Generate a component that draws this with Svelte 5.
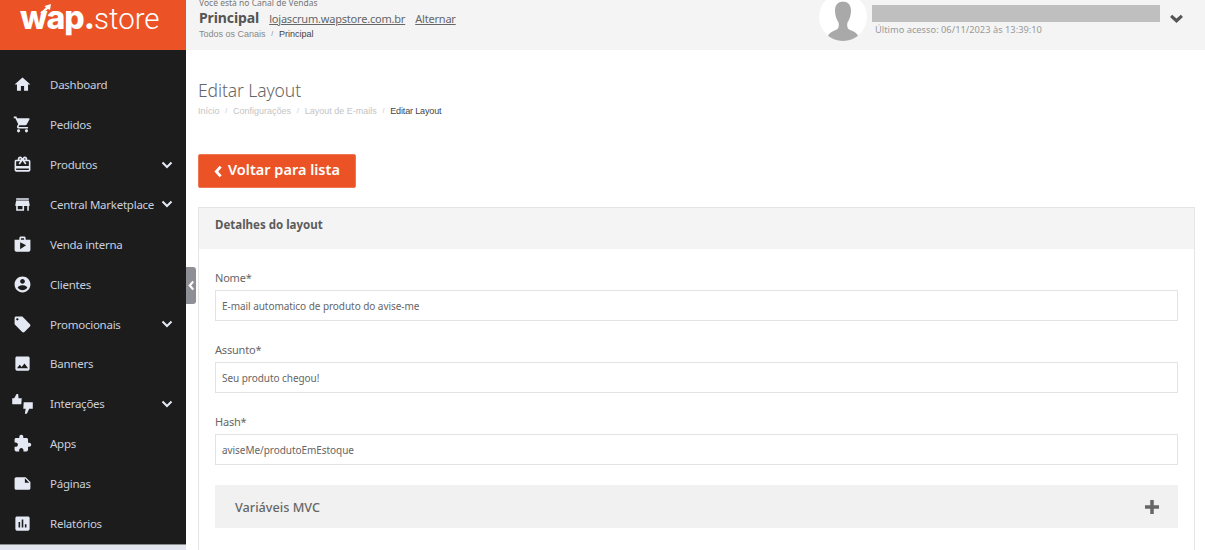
<script>
  const menu = [
    { label: "Dashboard", d: "M10 20v-6h4v6h5v-8h3L12 3 2 12h3v8z" },
    { label: "Pedidos", d: "M7 18c-1.1 0-1.99.9-1.99 2S5.9 22 7 22s2-.9 2-2-.9-2-2-2zM1 2v2h2l3.6 7.59-1.35 2.45c-.16.28-.25.61-.25.96 0 1.1.9 2 2 2h12v-2H7.42c-.14 0-.25-.11-.25-.25l.03-.12.9-1.63h7.45c.75 0 1.41-.41 1.75-1.03l3.58-6.49c.08-.14.12-.31.12-.48 0-.55-.45-1-1-1H5.21l-.94-2H1zm16 16c-1.1 0-1.99.9-1.99 2s.89 2 1.99 2 2-.9 2-2-.9-2-2-2z" },
    { label: "Produtos", open: true, d: "M20 6h-2.18c.11-.31.18-.65.18-1 0-1.66-1.34-3-3-3-1.05 0-1.96.54-2.5 1.35l-.5.67-.5-.68C10.96 2.54 10.05 2 9 2 7.34 2 6 3.34 6 5c0 .35.07.69.18 1H4c-1.11 0-1.99.89-1.99 2L2 19c0 1.11.89 2 2 2h16c1.11 0 2-.89 2-2V8c0-1.11-.89-2-2-2zm-5-2c.55 0 1 .45 1 1s-.45 1-1 1-1-.45-1-1 .45-1 1-1zM9 4c.55 0 1 .45 1 1s-.45 1-1 1-1-.45-1-1 .45-1 1-1zm11 15H4v-2h16v2zm0-5H4V8h5.08L7 10.83 8.62 12 11 8.76l1-1.36 1 1.36L15.38 12 17 10.83 14.92 8H20v6z" },
    { label: "Central Marketplace", open: true, d: "M20 4H4v2h16V4zm1 10v-2l-1-5H4l-1 5v2h1v6h10v-6h4v6h2v-6h1zm-9 4H6v-4h6v4z" },
    { label: "Venda interna", d: "M16 6V4c0-1.11-.89-2-2-2h-4c-1.11 0-2 .89-2 2v2H2v13c0 1.11.89 2 2 2h16c1.11 0 2-.89 2-2V6h-6zm-6-2h4v2h-4V4zM9 18V9l7.5 4L9 18z" },
    { label: "Clientes", d: "M12 2C6.48 2 2 6.48 2 12s4.48 10 10 10 10-4.48 10-10S17.52 2 12 2zm0 3c1.66 0 3 1.34 3 3s-1.34 3-3 3-3-1.34-3-3 1.34-3 3-3zm0 14.2c-2.5 0-4.71-1.28-6-3.22.03-1.99 4-3.08 6-3.08 1.99 0 5.97 1.09 6 3.08-1.29 1.94-3.5 3.22-6 3.22z" },
    { label: "Promocionais", open: true, d: "M21.41 11.58l-9-9C12.05 2.22 11.55 2 11 2H4c-1.1 0-2 .9-2 2v7c0 .55.22 1.05.59 1.42l9 9c.36.36.86.58 1.41.58.55 0 1.05-.22 1.41-.59l7-7c.37-.36.59-.86.59-1.41 0-.55-.23-1.06-.59-1.42zM5.5 7C4.67 7 4 6.33 4 5.5S4.67 4 5.5 4 7 4.67 7 5.5 6.33 7 5.5 7z" },
    { label: "Banners", d: "M21 19V5c0-1.1-.9-2-2-2H5c-1.1 0-2 .9-2 2v14c0 1.1.9 2 2 2h14c1.1 0 2-.9 2-2zM8.5 13.5l2.5 3.01L14.5 12l4.5 6H5l3.5-4.5z" },
    { label: "Interações", open: true, d: "M-1 5.500h2.500L4.500 0H6.500l.5 5.500h4l-.5 7.500H-1zM13.500 10.500h11.500v8h-4.500L17.500 25h-2.500l1-6.500H13z" },
    { label: "Apps", d: "M20.5 11H19V7c0-1.1-.9-2-2-2h-4V3.5C13 2.12 11.88 1 10.5 1S8 2.12 8 3.5V5H4c-1.1 0-1.99.9-1.99 2v3.8H3.5c1.49 0 2.7 1.21 2.7 2.7s-1.21 2.7-2.7 2.7H2V20c0 1.1.9 2 2 2h3.8v-1.5c0-1.49 1.21-2.7 2.7-2.7 1.49 0 2.7 1.21 2.7 2.7V22H17c1.1 0 2-.9 2-2v-4h1.5c1.38 0 2.5-1.12 2.5-2.5S21.88 11 20.5 11z" },
    { label: "Páginas", d: "M22 10l-6-6H4c-1.1 0-2 .9-2 2v12.01c0 1.1.9 1.99 2 1.99l16-.01c1.1 0 2-.89 2-1.99v-8zm-7-4.5l5.5 5.5H15V5.5z" },
    { label: "Relatórios", d: "M19 3H5c-1.1 0-2 .9-2 2v14c0 1.1.9 2 2 2h14c1.1 0 2-.9 2-2V5c0-1.1-.9-2-2-2zM9 17H7v-7h2v7zm4 0h-2V7h2v10zm4 0h-2v-4h2v4z" }
  ];

  const fields = [
    { label: "Nome*", value: "E-mail automatico de produto do avise-me" },
    { label: "Assunto*", value: "Seu produto chegou!" },
    { label: "Hash*", value: "aviseMe/produtoEmEstoque" }
  ];
</script>

<div class="page">
  <aside class="sidebar">
    <div class="logo">
      <span class="logo-wap">wap.</span><span class="logo-store">store</span>
      <svg class="logo-arrow" width="11" height="9" viewBox="0 0 11 9"><path d="M0 9 6 3.500 4.500 2 11 0 10 6 8 5 2.500 9z" fill="#fff" /></svg>
    </div>
    <nav class="menu">
      {#each menu as item}
        <div class="menu-item">
          <svg class="menu-icon" viewBox="0 0 24 24"><path d={item.d} fill="currentColor" /></svg>
          <span class="menu-label">{item.label}</span>
          {#if item.open}
            <svg class="menu-caret" viewBox="0 0 12 8"><path d="M1.5 1.5 6 6l4.5-4.5" fill="none" stroke="currentColor" stroke-width="2" /></svg>
          {/if}
        </div>
      {/each}
    </nav>
    <div class="sidebar-foot"></div>
  </aside>

  <button class="collapse" aria-label="Recolher menu">
    <svg viewBox="0 0 8 12" width="7" height="11"><path d="M6 1.5 2 6l4 4.500" fill="none" stroke="#fff" stroke-width="2.400" /></svg>
  </button>

  <div class="main">
    <header class="topbar">
      <div class="channel">
        <div class="channel-note">Você está no Canal de Vendas</div>
        <div class="channel-row">
          <strong>Principal</strong>
          <a href="#top">lojascrum.wapstore.com.br</a>
          <a href="#top">Alternar</a>
        </div>
        <div class="crumbs top-crumbs">
          <span>Todos os Canais</span><i>/</i><span class="current">Principal</span>
        </div>
      </div>
      <div class="user">
        <div class="avatar">
          <svg viewBox="0 0 48 48" width="48" height="48">
            <path d="M24.500 8.500c-5 0-8.500 3-8.500 9 0 5 1.500 9 3.500 12 .5 2 .5 4-.5 6-2 2-8 3-10 7-.5 2-.5 3-.5 5.500h31c0-2.500 0-3.500-.5-5.500-2-4-8-5-10-7-1-2-1-4-.5-6 2-3 3.500-7 3.500-12 0-6-3.500-9-8.500-9z" fill="#a9a9a9" />
          </svg>
        </div>
        <div class="user-info">
          <div class="user-name"></div>
          <div class="user-last">Último acesso: 06/11/2023 às 13:39:10</div>
        </div>
        <svg class="user-caret" viewBox="0 0 16 10" width="15" height="9"><path d="M2 2l6 5.500L14 2" fill="none" stroke="#555" stroke-width="3.500" /></svg>
      </div>
    </header>

    <main class="content">
      <h1>Editar Layout</h1>
      <div class="crumbs page-crumbs">
        <span>Início</span><i>/</i><span>Configurações</span><i>/</i><span>Layout de E-mails</span><i>/</i><span class="current">Editar Layout</span>
      </div>

      <button class="back">
        <svg viewBox="0 0 8 12" width="9" height="13"><path d="M6 1.500 2 6l4 4.500" fill="none" stroke="#fff" stroke-width="2.600" /></svg>
        <span>Voltar para lista</span>
      </button>

      <section class="card">
        <div class="card-head">Detalhes do layout</div>
        <div class="card-body">
          {#each fields as field}
            <div class="field">
              <div class="field-label">{field.label}</div>
              <div class="input">{field.value}</div>
            </div>
          {/each}
          <div class="accordion">
            <span>Variáveis MVC</span>
            <svg viewBox="0 0 14 14" width="14" height="14"><path d="M7 0v14M0 7h14" stroke="#666" stroke-width="3.500" /></svg>
          </div>
        </div>
      </section>
    </main>
  </div>
</div>

<style>
  :global(body) {
    margin: 0;
    background: #fff;
  }

  .page {
    position: relative;
    display: flex;
    width: 1205px;
    height: 550px;
    overflow: hidden;
    font-family: "Noto Sans", sans-serif;
    color: #555;
  }

  .sidebar {
    display: flex;
    flex-direction: column;
    flex: 0 0 186px;
    min-width: 0;
    background: #1c1c1c;
  }

  .logo {
    position: relative;
    display: flex;
    align-items: baseline;
    height: 50px;
    box-sizing: border-box;
    padding: 0 0 0 20px;
    background: #eb5327;
    color: #fff;
    line-height: 36px;
  }

  .logo-wap {
    font-family: Inter, sans-serif;
    font-size: 32px;
    font-weight: 800;
    letter-spacing: -1px;
  }

  .logo-store {
    font-family: Roboto, sans-serif;
    font-size: 29.500px;
    font-weight: 300;
  }

  .logo-arrow {
    position: absolute;
    left: 40px;
    top: 4px;
  }

  .menu {
    flex: 1;
    padding-top: 14.800px;
  }

  .menu-item {
    display: flex;
    align-items: center;
    height: 39.900px;
    padding-left: 13px;
    color: #e4e9f4;
  }

  .menu-icon {
    width: 19px;
    height: 19px;
    margin-right: 18px;
    flex: none;
    overflow: visible;
  }

  .menu-label {
    font-size: 11.500px;
    letter-spacing: -0.250px;
    color: #c9cfdf;
    white-space: nowrap;
  }

  .menu-caret {
    width: 12px;
    height: 8px;
    margin-left: auto;
    margin-right: 13px;
    flex: none;
  }

  .sidebar-foot {
    height: 6px;
    background: #e3e6ef;
    border-top: 1px solid #8d8d8d;
    box-sizing: border-box;
  }

  .collapse {
    position: absolute;
    left: 186px;
    top: 267px;
    display: flex;
    align-items: center;
    justify-content: center;
    width: 10px;
    height: 37px;
    padding: 0;
    border: 0;
    border-radius: 0 3px 3px 0;
    background: #8f9095;
  }

  .main {
    flex: 1;
    min-width: 0;
  }

  .topbar {
    display: flex;
    justify-content: space-between;
    height: 50px;
    background: #f4f4f4;
    overflow: hidden;
  }

  .channel {
    padding-left: 13px;
    margin-top: -3px;
  }

  .channel-note {
    font-size: 8.500px;
    line-height: 12px;
    color: #777;
  }

  .channel-row {
    display: flex;
    align-items: baseline;
    gap: 10px;
    height: 18px;
    line-height: 18px;
  }

  .channel-row strong {
    font-size: 14px;
    letter-spacing: -0.100px;
    color: #555;
  }

  .channel-row a {
    font-size: 11px;
    letter-spacing: -0.200px;
    color: #666;
  }

  .crumbs {
    display: flex;
    align-items: center;
    font-family: "Liberation Sans", sans-serif;
    color: #aaa;
  }

  .crumbs i {
    font-style: normal;
    margin: 0 5.800px;
    font-size: 7px;
  }

  .crumbs .current {
    color: #444;
  }

  .top-crumbs {
    font-size: 9px;
    line-height: 14px;
    color: #888;
  }

  .user {
    display: flex;
    align-items: flex-start;
    padding-right: 21px;
  }

  .avatar {
    width: 48px;
    height: 48px;
    margin-top: -7px;
    border-radius: 50%;
    background: #fff;
    overflow: hidden;
  }

  .user-info {
    width: 288px;
    margin-left: 5px;
    padding-top: 5px;
  }

  .user-name {
    height: 17px;
    background: #bfbfbf;
  }

  .user-last {
    margin: 1px 0 0 3px;
    font-size: 9.300px;
    line-height: 13px;
    color: #999;
  }

  .user-caret {
    margin: 14px 0 0 9px;
  }

  .content {
    padding: 29px 10px 0 12px;
  }

  h1 {
    margin: 0;
    font-size: 17.500px;
    font-weight: 300;
    letter-spacing: -0.100px;
    line-height: 22px;
    color: #666;
  }

  .page-crumbs {
    margin-top: 4px;
    font-size: 9px;
    line-height: 12px;
    color: #c4c4c4;
  }

  .page-crumbs .current {
    letter-spacing: -0.150px;
  }

  .back {
    display: flex;
    align-items: center;
    gap: 5px;
    height: 34px;
    margin-top: 37px;
    padding: 0 15px 4px;
    border: 1px solid #ee7653;
    border-radius: 2px;
    background: #eb5327;
    color: #fff;
    font-family: "Noto Sans", sans-serif;
    font-size: 14.500px;
    font-weight: 600;
  }

  .back svg {
    margin-top: 4px;
  }

  .card {
    margin-top: 19px;
    border: 1px solid #e5e5e5;
    border-bottom: 0;
  }

  .card-head {
    height: 41px;
    padding-left: 16px;
    background: #f4f4f4;
    font-size: 11.500px;
    font-weight: 700;
    line-height: 33px;
    color: #5b5b5b;
  }

  .card-body {
    padding: 20px 16px 40px;
  }

  .field {
    margin-bottom: 20px;
  }

  .field-label {
    font-size: 11px;
    letter-spacing: -0.200px;
    line-height: 17px;
    margin-bottom: 4px;
    color: #666;
  }

  .input {
    height: 31px;
    padding-left: 6px;
    border: 1px solid #e3e3e3;
    box-sizing: border-box;
    font-size: 10px;
    letter-spacing: -0.050px;
    line-height: 31px;
    color: #666;
  }

  .accordion {
    display: flex;
    align-items: center;
    justify-content: space-between;
    height: 43px;
    padding: 0 19px 0 20px;
    background: #f1f1f1;
    font-size: 12.700px;
    font-weight: 500;
    color: #666;
  }
</style>
